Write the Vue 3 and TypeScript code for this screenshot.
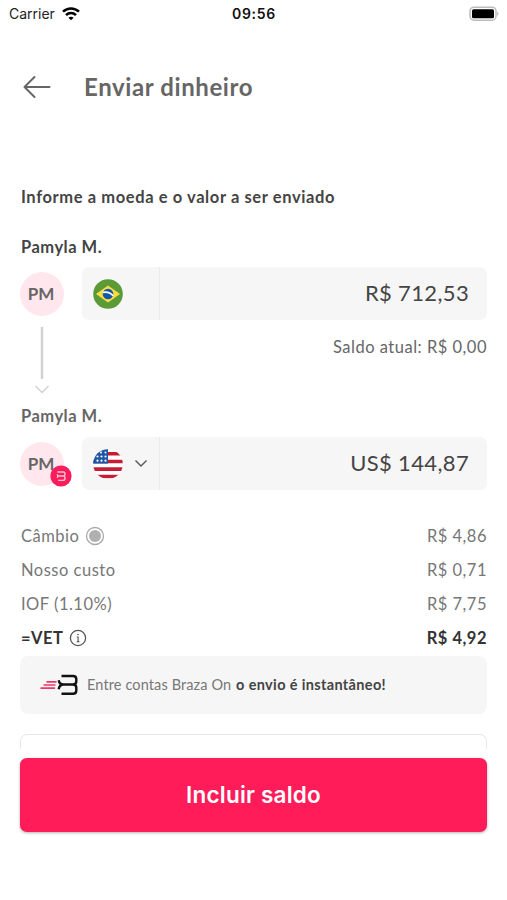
<script setup lang="ts">
interface QuoteRow {
  label: string
  value: string
  icon?: 'radio' | 'info'
  strong?: boolean
}

const rows: QuoteRow[] = [
  { label: 'Câmbio', value: 'R$ 4,86', icon: 'radio' },
  { label: 'Nosso custo', value: 'R$ 0,71' },
  { label: 'IOF (1.10%)', value: 'R$ 7,75' },
  { label: '=VET', value: 'R$ 4,92', icon: 'info', strong: true },
]
</script>

<template>
  <div class="screen">
    <div class="status">
      <div class="carrier">
        <span>Carrier</span>
        <svg width="18" height="14" viewBox="0 0 18 14" fill="none" stroke="#000" stroke-width="2.5">
          <path d="M1 4.700C5.500 .3 12.500 .3 17 4.700" />
          <path d="M4 8.200C6.800 5.400 11.200 5.400 14 8.200" />
          <path d="M9 13.300L6.400 10.700C7.900 9.400 10.100 9.400 11.600 10.700Z" fill="#000" stroke="none" />
        </svg>
      </div>
      <span class="clock">09:56</span>
      <div class="battery">
        <svg width="30" height="16" viewBox="0 0 30 16">
          <rect x="1" y="1.200" width="26" height="13" rx="4" fill="#fff" stroke="#bcbcbc" stroke-width="1.500" />
          <rect x="3" y="3.200" width="22" height="9" rx="1.500" fill="#000" />
          <path d="M28.300 5.500Q30.500 7.700 28.300 10Z" fill="#aaa" />
        </svg>
      </div>
    </div>

    <header class="header">
      <svg width="28" height="24" viewBox="0 0 28 24" fill="none" stroke="#666" stroke-width="2" stroke-linecap="round" stroke-linejoin="round">
        <path d="M26.500 12H1.500M11.500 2L1.500 12L11.500 22" />
      </svg>
      <h1>Enviar dinheiro</h1>
    </header>

    <main class="content">
      <p class="prompt">Informe a moeda e o valor a ser enviado</p>

      <p class="name">Pamyla M.</p>
      <div class="account">
        <div class="avatar"><span>PM</span></div>
        <div class="field">
          <div class="currency">
            <svg class="flag" width="30" height="30" viewBox="0 0 30 30">
              <circle cx="15" cy="15" r="14.800" fill="#5b9b37" />
              <path d="M3 15L15 6.500L27 15L15 23.500Z" fill="#fddb43" />
              <circle cx="15" cy="15" r="5.300" fill="#1458ab" />
              <path d="M9.800 13.400C13.500 12.600 17.700 14 20.200 16.800" fill="none" stroke="#fff" stroke-width="1.600" />
            </svg>
          </div>
          <div class="amount brl">R$ 712,53</div>
        </div>
      </div>

      <div class="between">
        <svg class="down" width="18" height="70" viewBox="0 0 18 70" fill="none" stroke="#d0d0d0">
          <path d="M9 1V53" stroke-width="2.400" />
          <path d="M2.500 60L9 66.500L15.500 60" stroke-width="1.300" />
        </svg>
        <p class="balance">Saldo atual: R$ 0,00</p>
      </div>

      <p class="name muted">Pamyla M.</p>
      <div class="account second">
        <div class="avatar">
          <span>PM</span>
          <svg class="badge" width="22" height="22" viewBox="0 0 22 22">
            <circle cx="11" cy="11" r="10.600" fill="#fb1d5b" />
            <path d="M7.300 7H13.200Q15 7 15 8.800V9.300Q15 11 13.200 11H8.800M13.200 11Q15 11 15 12.800V13.600Q15 15.400 13.200 15.400H8.200M7.300 9.300Q7.300 11 8.800 11Q7.300 11 7.300 12.800" fill="none" stroke="#ffc2d4" stroke-width="1.400" />
          </svg>
        </div>
        <div class="field">
          <div class="currency">
            <svg class="flag" width="30" height="30" viewBox="0 0 30 30">
              <defs><clipPath id="us-round"><circle cx="15" cy="15" r="14.800" /></clipPath></defs>
              <g clip-path="url(#us-round)">
                <rect width="30" height="30" fill="#fff" />
                <path d="M0 5H30M0 12.700H30M0 20.300H30M0 27.700H30" transform="translate(0 -.2)" stroke="#c71c35" stroke-width="3.600" />
                <rect width="15" height="14.600" fill="#1b57a5" />
                <g fill="#fff">
                  <circle cx="8" cy="3.500" r="1" /><circle cx="12.500" cy="3.500" r="1" />
                  <circle cx="4.500" cy="7.500" r="1.100" /><circle cx="8.500" cy="7.500" r="1.100" /><circle cx="12.500" cy="7.500" r="1.100" />
                  <circle cx="4.500" cy="11.700" r="1.100" /><circle cx="8.500" cy="11.700" r="1.100" /><circle cx="12.500" cy="11.700" r="1.100" />
                </g>
              </g>
            </svg>
            <svg width="14" height="9" viewBox="0 0 14 9" fill="none" stroke="#555" stroke-width="1.400">
              <path d="M1.500 1.500L7 7L12.500 1.500" />
            </svg>
          </div>
          <div class="amount usd">US$ 144,87</div>
        </div>
      </div>

      <dl class="quote">
        <div v-for="row in rows" :key="row.label" class="row" :class="{ strong: row.strong }">
          <dt>
            <span>{{ row.label }}</span>
            <svg v-if="row.icon === 'radio'" width="20" height="20" viewBox="0 0 20 20">
              <circle cx="10" cy="10" r="8.500" fill="none" stroke="#aaa" stroke-width="1.300" />
              <circle cx="10" cy="10" r="6" fill="#b0b0b0" />
            </svg>
            <svg v-else-if="row.icon === 'info'" width="18" height="18" viewBox="0 0 18 18" fill="none" stroke="#555">
              <circle cx="9" cy="9" r="7.600" stroke-width="1.300" />
              <path d="M7.800 8H9.100V12.700M7.800 12.600H10.400" stroke-width="1.100" />
              <circle cx="9" cy="5.500" r=".8" fill="#555" stroke="none" />
            </svg>
          </dt>
          <dd>{{ row.value }}</dd>
        </div>
      </dl>

      <div class="notice">
        <svg width="38" height="22" viewBox="0 0 38 22" fill="none">
          <path d="M6.500 7.900H16.500M3.500 11H15.500M.5 14.100H15" stroke="#ee3768" stroke-width="1.700" />
          <path d="M21.500 2H33Q36.300 2 36.300 5.200V7.300Q36.300 10.500 33 10.500H23.500M33 10.500Q36.300 10.500 36.300 13.700V16.500Q36.300 19.800 33 19.800H21.500M18.700 6.300Q19.400 10.500 23.500 10.500Q19.400 10.500 18.700 15.200" stroke="#111" stroke-width="2.400" />
        </svg>
        <p><span class="light">Entre contas Braza On</span> <b>o envio é instantâneo!</b></p>
      </div>

      <div class="next-card"></div>
      <button class="cta" type="button">Incluir saldo</button>
    </main>
  </div>
</template>

<style>
body {
  background: #fff;
}
</style>

<style scoped>
.screen {
  width: 507px;
  height: 900px;
  overflow: hidden;
  background: #fff;
  color: #444;
  font-family: Lato, "Noto Sans", sans-serif;
}
p, h1, dl, dd {
  margin: 0;
}
svg {
  display: block;
  flex: none;
}
.status {
  display: grid;
  grid-template-columns: 1fr auto 1fr;
  align-items: center;
  height: 27px;
  padding: 0 8px 0 9px;
  color: #222;
  font: 14px/27px Inter, sans-serif;
}
.carrier {
  display: flex;
  align-items: center;
  gap: 7px;
}
.clock {
  color: #111;
  font-weight: 600;
  letter-spacing: .7px;
}
.battery {
  justify-self: end;
}
.header {
  display: flex;
  align-items: center;
  gap: 33px;
  height: 119px;
  padding: 0 0 1px 23px;
}
.header svg {
  margin-top: 1px;
}
h1 {
  color: #666;
  font-size: 24px;
  line-height: 30px;
  font-weight: 700;
  letter-spacing: .6px;
}
.content {
  padding: 38px 20px 0;
}
.prompt {
  padding-left: 1px;
  font-size: 16.500px;
  font-weight: 700;
  line-height: 24px;
  letter-spacing: .6px;
}
.name {
  margin-top: 26px;
  padding-left: 1px;
  font-size: 16.500px;
  font-weight: 700;
  line-height: 24px;
  letter-spacing: .5px;
}
.muted {
  margin-top: 1px;
  color: #666;
}
.account {
  display: flex;
  align-items: center;
  gap: 18px;
  height: 53px;
  margin-top: 8px;
}
.second {
  margin-top: 9px;
}
.avatar {
  position: relative;
  display: grid;
  place-items: center;
  width: 44px;
  height: 44px;
  border-radius: 50%;
  background: #ffe7ed;
  color: #666;
  font-size: 17px;
  font-weight: 700;
}
.avatar span {
  padding-right: 2px;
}
.badge {
  position: absolute;
  right: -8px;
  bottom: -1px;
}
.field {
  display: flex;
  flex: 1;
  height: 53px;
  border-radius: 7px;
  background: #f6f6f6;
}
.currency {
  display: flex;
  align-items: center;
  gap: 11px;
  width: 66px;
  padding-left: 11px;
  border-right: 1px solid #eaeaea;
}
.amount {
  flex: 1;
  padding-right: 18px;
  text-align: right;
  font-size: 22px;
  line-height: 52px;
  letter-spacing: .35px;
}
.between {
  display: flex;
  justify-content: space-between;
  height: 83px;
  padding: 6px 0 0 13px;
  box-sizing: border-box;
}
.balance {
  padding-top: 9px;
  color: #666;
  font-size: 16.500px;
  line-height: 24px;
  letter-spacing: .5px;
}
.quote {
  margin-top: 29px;
}
.row {
  display: flex;
  align-items: center;
  justify-content: space-between;
  height: 34px;
  padding: 0 0 0 1px;
  color: #777;
  font-size: 16.500px;
  letter-spacing: .5px;
}
dt {
  display: flex;
  align-items: center;
  gap: 6px;
}
.strong {
  color: #333;
  font-weight: 700;
}
.notice {
  display: flex;
  align-items: center;
  gap: 9px;
  height: 58px;
  margin-top: 1px;
  padding-left: 20px;
  border-radius: 8px;
  background: #f6f6f6;
  font-size: 14.500px;
  letter-spacing: .12px;
}
.notice p {
  padding-bottom: 1px;
}
.notice b {
  margin-left: 1px;
  letter-spacing: .35px;
}
.light {
  color: #777;
}
.next-card {
  height: 14px;
  margin: 20px 0 9px;
  border: 1px solid #e8e8e8;
  border-bottom: 0;
  border-radius: 7px 7px 0 0;
}
.cta {
  display: block;
  width: 100%;
  height: 74px;
  padding: 0;
  border: 0;
  border-radius: 7px;
  background: #ff1c59;
  box-shadow: 0 1px 3px rgba(0, 0, 0, .3);
  color: #fff;
  font: 600 22.500px/74px Inter, sans-serif;
  letter-spacing: .2px;
}
</style>
